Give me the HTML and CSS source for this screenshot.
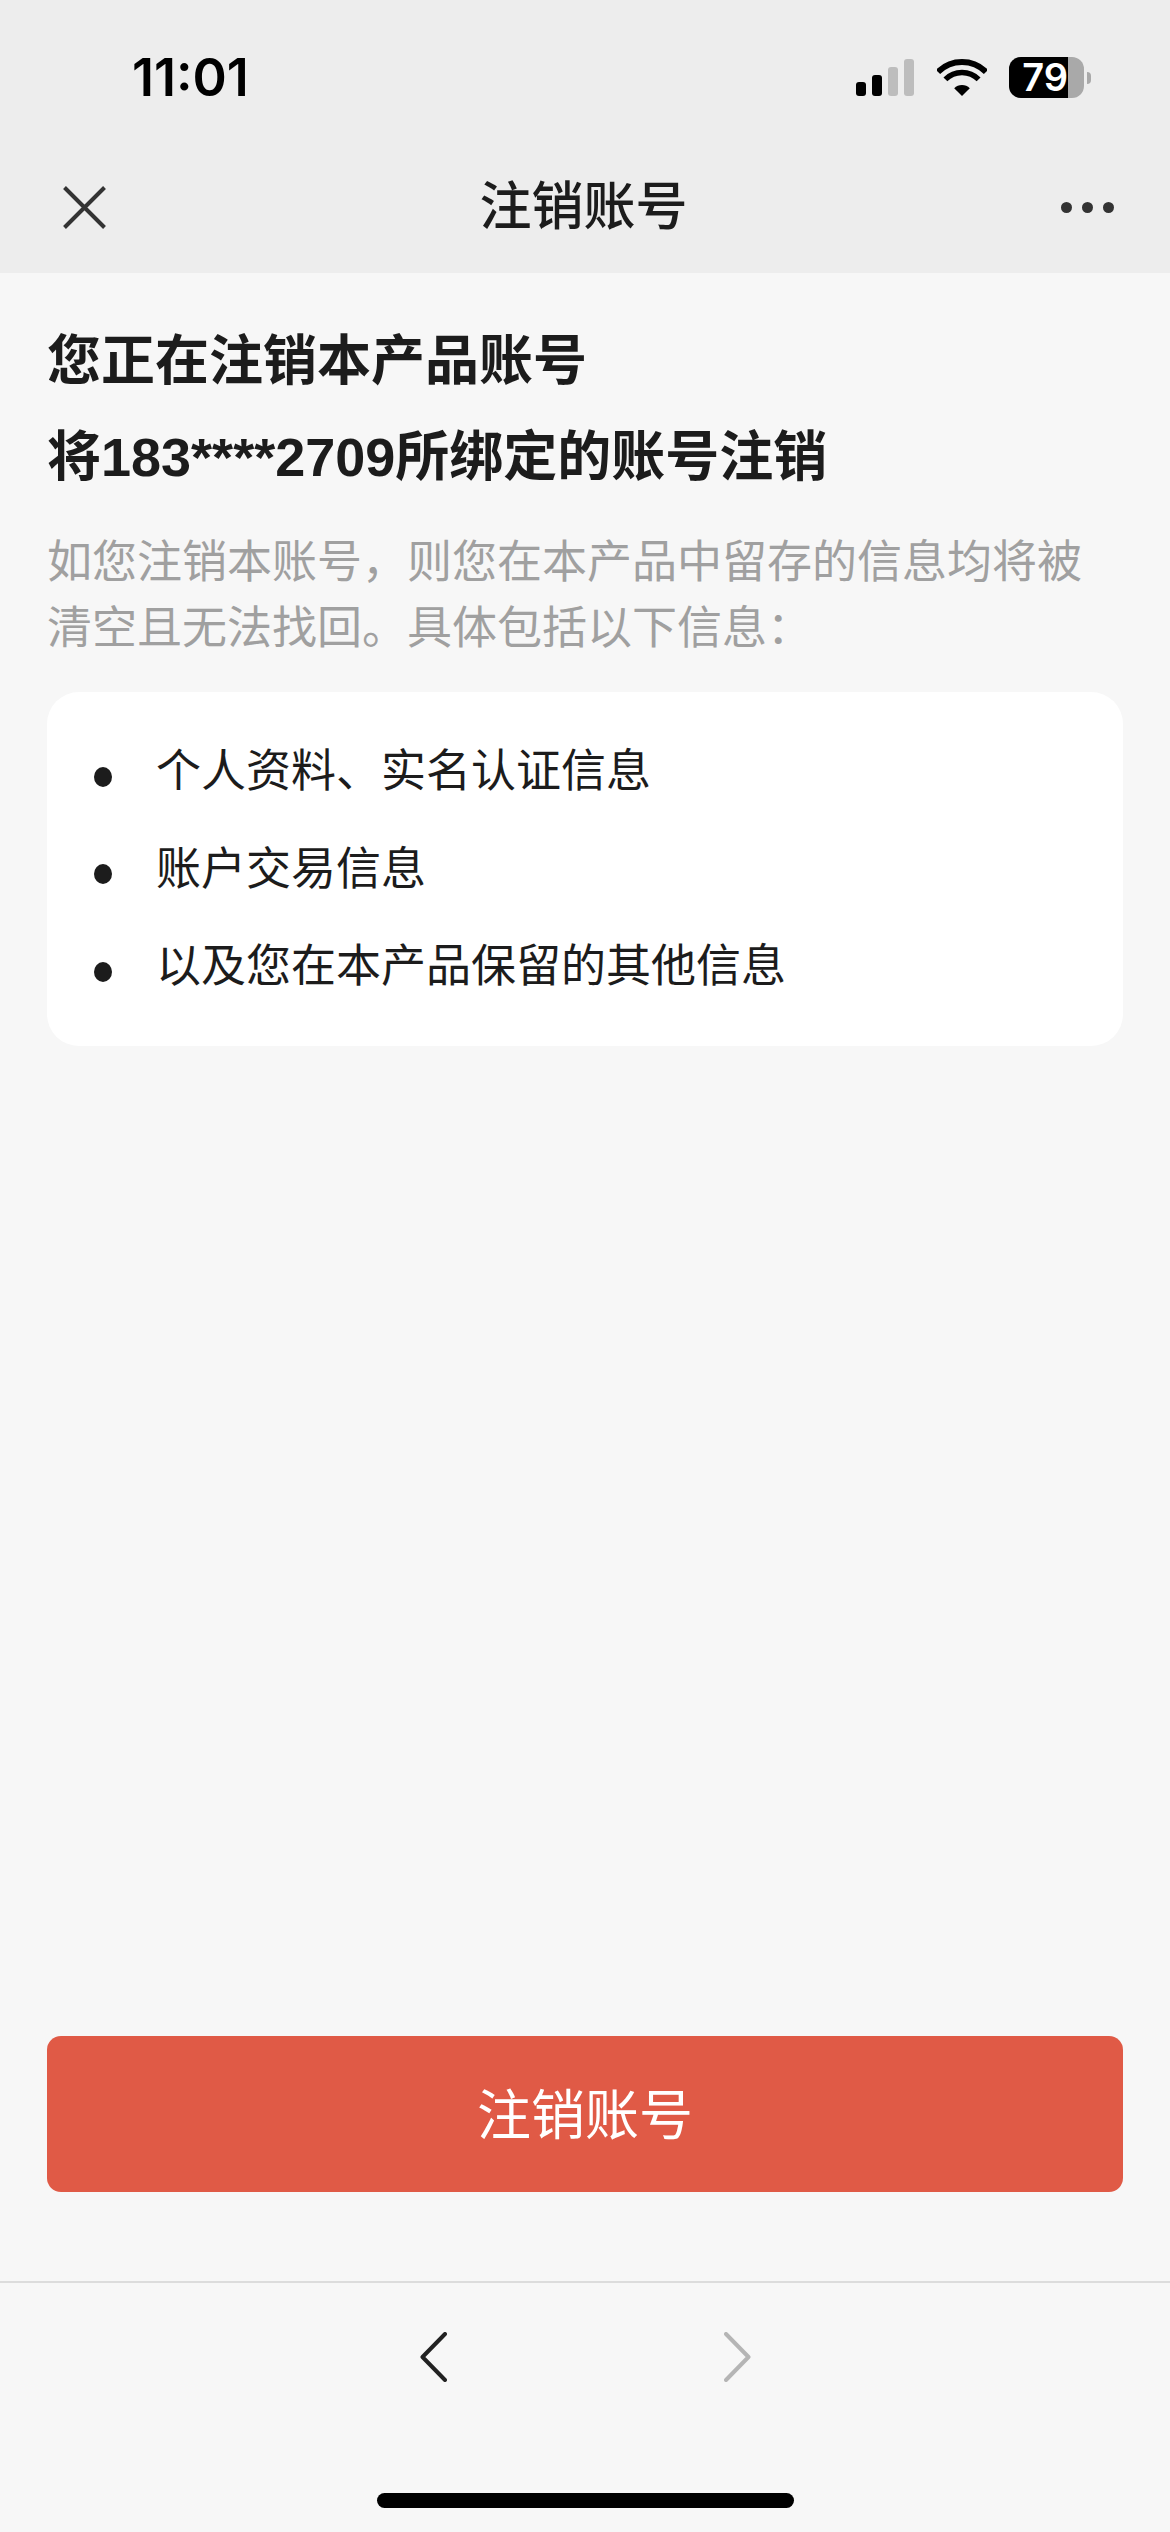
FILE: index.html
```html
<!DOCTYPE html>
<html lang="zh-CN">
<head>
  <meta charset="UTF-8" />
  <meta name="viewport" content="width=device-width, initial-scale=1.0"/>
  <title>注销账号</title>
  <link rel="stylesheet" href="styles.css">
</head>
<body>

<div class="page">
  <div class="top">
    <div class="status">
      <span class="time">11:01</span>
      <div class="signal">
        <i class="bar bar1"></i>
        <i class="bar bar2"></i>
        <i class="bar bar3 off"></i>
        <i class="bar bar4 off"></i>
      </div>
      <svg class="wifi" viewBox="0 0 50 37">
        <path d="M1 13 A34 34 0 0 1 49 13" fill="none" stroke="#000" stroke-width="6"/>
        <path d="M8.4 20.4 A23.5 23.5 0 0 1 41.6 20.4" fill="none" stroke="#000" stroke-width="5.5"/>
        <path d="M25 37 L17.2 29.2 A11 11 0 0 1 32.8 29.2 Z" fill="#000"/>
      </svg>
      <div class="battery"><span class="level">79</span></div>
      <i class="nub"></i>
    </div>
    <div class="nav">
      <svg class="close" viewBox="0 0 43 43">
        <path d="M1.5 1.5 L41.5 41.5 M41.5 1.5 L1.5 41.5" fill="none" stroke="#333" stroke-width="4"/>
      </svg>
      <div class="nav-title">注销账号</div>
      <div class="dots"><i></i><i></i><i></i></div>
    </div>
  </div>

  <div class="content">
    <h1>您正在注销本产品账号</h1>
    <h1>将183****2709所绑定的账号注销</h1>
    <p class="desc">如您注销本账号，则您在本产品中留存的信息均将被清空且无法找回。具体包括以下信息：</p>
    <ul class="info">
      <li>个人资料、实名认证信息</li>
      <li>账户交易信息</li>
      <li>以及您在本产品保留的其他信息</li>
    </ul>
    <button class="danger">注销账号</button>
  </div>

  <div class="footer">
    <div class="arrows">
      <svg class="arrow" viewBox="0 0 27 50">
        <path d="M25 2 L2.5 25 L25 48" fill="none" stroke="#222" stroke-width="4" stroke-linecap="round" stroke-linejoin="round"/>
      </svg>
      <svg class="arrow" viewBox="0 0 27 50">
        <path d="M2 2 L24.5 25 L2 48" fill="none" stroke="#b5b5b5" stroke-width="4" stroke-linecap="round" stroke-linejoin="round"/>
      </svg>
    </div>
    <div class="home"></div>
  </div>
</div>

</body>
</html>
```

FILE: styles.css
```css
* {
  box-sizing: border-box;
}
body {
  margin: 0;
  background: #f7f7f7;
  color: #1c1c1c;
  font-family: "Liberation Sans", "Noto Sans CJK SC", sans-serif;
}
.page {
  height: 2532px;
  display: flex;
  flex-direction: column;
  overflow: hidden;
}
.top {
  height: 273px;
  background: #ededed;
}
.status {
  height: 133px;
  display: flex;
  align-items: flex-start;
  padding: 57px 79px 0 132px;
}
.time {
  font-family: Inter, sans-serif;
  font-size: 52px;
  font-weight: 600;
  line-height: 42px;
  color: #000;
  margin-right: auto;
}
.signal {
  display: flex;
  align-items: flex-end;
  gap: 6px;
  height: 37px;
  margin-top: 2px;
}
.bar {
  display: block;
  width: 10px;
  border-radius: 3px;
  background: #000;
}
.bar1 { height: 14px; }
.bar2 { height: 21px; }
.bar3 { height: 29px; }
.bar4 { height: 37px; }
.bar.off {
  background: #bdbdbd;
}
.wifi {
  width: 50px;
  height: 37px;
  margin: 2px 0 0 23px;
}
.battery {
  width: 75px;
  height: 41px;
  margin-left: 22px;
  border-radius: 12px;
  background: #a9a9a9;
}
.level {
  display: block;
  width: 59px;
  height: 41px;
  border-radius: 12px 0 0 12px;
  background: #000;
  color: #fff;
  font-family: Inter, sans-serif;
  font-size: 38px;
  font-weight: 600;
  line-height: 41px;
  text-align: right;
}
.nub {
  width: 4px;
  height: 12px;
  margin: 15px 0 0 3px;
  border-radius: 0 4px 4px 0;
  background: #a9a9a9;
}
.nav {
  height: 140px;
  display: flex;
  align-items: center;
  justify-content: space-between;
  padding: 8px 56px 0 63px;
}
.close {
  width: 43px;
  height: 43px;
}
.nav-title {
  font-size: 52px;
  font-weight: 500;
  line-height: 60px;
}
.dots {
  width: 53px;
  display: flex;
  justify-content: space-between;
}
.dots i {
  display: block;
  width: 11px;
  height: 11px;
  border-radius: 50%;
  background: #333;
}
.content {
  flex: 1;
  display: flex;
  flex-direction: column;
  padding: 40px 47px 89px;
}
h1 {
  margin: 0;
  font-size: 54px;
  font-weight: 700;
  line-height: 96px;
}
.desc {
  margin: 25px 0 30px;
  color: #a0a0a0;
  font-size: 45px;
  line-height: 66px;
}
.info {
  list-style: none;
  margin: 0;
  padding: 31px 47px 30px;
  background: #fff;
  border-radius: 32px;
}
.info li {
  display: flex;
  align-items: center;
  gap: 44px;
  font-size: 45px;
  line-height: 97.5px;
}
.info li::before {
  content: "";
  width: 18px;
  height: 20px;
  margin-top: 10px;
  border-radius: 50%;
  background: #1c1c1c;
}
.danger {
  margin-top: auto;
  height: 156px;
  padding: 4px 0 0;
  border: none;
  border-radius: 14px;
  background: #e05a46;
  color: #fff;
  font-family: inherit;
  font-size: 54px;
  line-height: 60px;
}
.footer {
  height: 251px;
  border-top: 2px solid #dcdcdc;
  padding-top: 49px;
}
.arrows {
  display: flex;
  justify-content: center;
  gap: 277px;
}
.arrow {
  width: 27px;
  height: 50px;
}
.home {
  width: 417px;
  height: 15px;
  margin: 111px auto 0;
  border-radius: 8px;
  background: #000;
}
```
